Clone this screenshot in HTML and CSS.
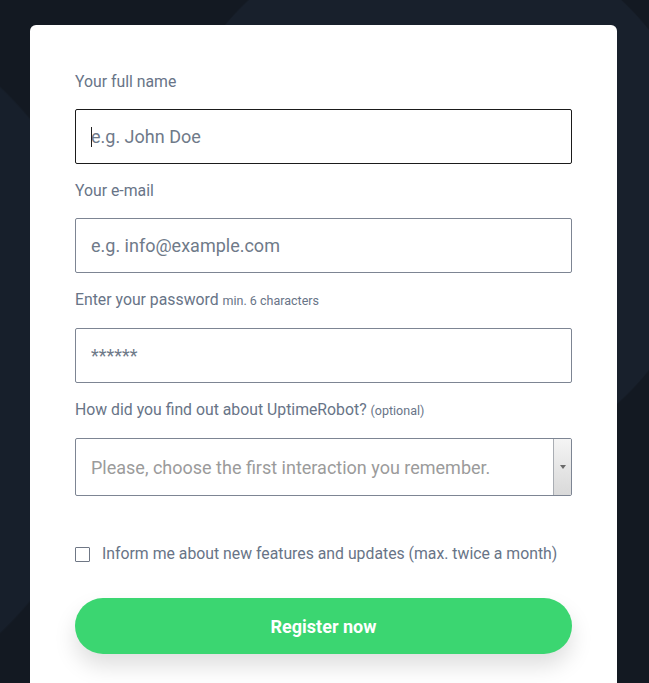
FILE: index.html
```html
<!DOCTYPE html>
<html lang="en">
<head>
<meta charset="utf-8">
<title>Register</title>
<link rel="stylesheet" href="styles.css">
</head>
<body>
<div class="card">
  <form class="form">
    <label class="label">Your full name</label>
    <div class="field">
      <input class="input input-focus" type="text" placeholder="e.g. John Doe">
      <span class="caret"></span>
    </div>

    <label class="label">Your e-mail</label>
    <div class="field">
      <input class="input" type="email" placeholder="e.g. info@example.com">
    </div>

    <label class="label">Enter your password <small class="hint">min. 6 characters</small></label>
    <div class="field">
      <input class="input" type="password" placeholder="******">
    </div>

    <label class="label">How did you find out about UptimeRobot? <small class="hint">(optional)</small></label>
    <div class="select">
      <span class="select-text">Please, choose the first interaction you remember.</span>
      <span class="select-btn"><span class="tri"></span></span>
    </div>

    <label class="check">
      <span class="box"></span>
      <span class="check-text">Inform me about new features and updates (max. twice a month)</span>
    </label>

    <button type="button" class="btn">Register now</button>
  </form>
</div>
</body>
</html>
```

FILE: styles.css
```css
html, body {
  margin: 0;
  padding: 0;
}
body {
  width: 649px;
  height: 683px;
  overflow: hidden;
  font-family: Roboto, "Liberation Sans", Arial, sans-serif;
  background-color: #131922;
  background-image:
    radial-gradient(circle 274px at 435px 200px, #18202c 99.5%, transparent 100%),
    radial-gradient(circle 378px at -260px 360px, #171f2b 99.5%, transparent 100%);
  background-repeat: no-repeat;
}
.card {
  margin: 25px 0 0 30px;
  width: 587px;
  height: 658px;
  box-sizing: border-box;
  background: #ffffff;
  border-radius: 6px 6px 0 0;
  padding: 47px 45px 0;
}
.form {
  display: flex;
  flex-direction: column;
}
.label {
  display: block;
  font-size: 15.8px;
  line-height: 20px;
  color: #687487;
  margin-bottom: 17px;
}
.hint {
  font-size: 12.5px;
  color: #687487;
}
.field {
  position: relative;
  margin-bottom: 17px;
}
.input {
  display: block;
  width: 100%;
  height: 55px;
  box-sizing: border-box;
  border: 1px solid #7d8593;
  border-radius: 2px;
  padding: 0 15px;
  font-family: Roboto, "Liberation Sans", Arial, sans-serif;
  font-size: 18px;
  color: #333;
  background: #fff;
  outline: none;
}
.input::placeholder {
  color: #6f7a89;
  opacity: 1;
}
.input-focus {
  border-color: #1b1b1b;
}
.caret {
  position: absolute;
  left: 16px;
  top: 18px;
  width: 1px;
  height: 20px;
  background: #222;
}
.select {
  display: flex;
  height: 58px;
  box-sizing: border-box;
  border: 1px solid #7d8593;
  border-radius: 2px;
  overflow: hidden;
}
.select-text {
  flex: 1;
  display: flex;
  align-items: center;
  padding-left: 15px;
  font-size: 18px;
  color: #9b9b9b;
  white-space: nowrap;
}
.select-btn {
  width: 17px;
  border-left: 1px solid #a9adb3;
  background: linear-gradient(to bottom, #f4f4f4, #d9d9d9);
  display: flex;
  align-items: center;
  justify-content: center;
}
.tri {
  width: 0;
  height: 0;
  border-left: 3px solid transparent;
  border-right: 3px solid transparent;
  border-top: 4px solid #6a6a6a;
}
.check {
  display: flex;
  align-items: center;
  gap: 12px;
  margin-top: 48px;
  height: 20px;
}
.box {
  width: 15px;
  height: 15px;
  box-sizing: border-box;
  border: 1px solid #6f7785;
  border-radius: 1px;
  flex: none;
}
.check-text {
  font-size: 15.8px;
  line-height: 20px;
  color: #687487;
}
.btn {
  margin-top: 34px;
  height: 56px;
  border: none;
  border-radius: 28px;
  background: #3bd671;
  color: #ffffff;
  font-family: Roboto, "Liberation Sans", Arial, sans-serif;
  font-size: 18px;
  font-weight: 700;
  box-shadow: 0 12px 22px rgba(0, 0, 0, 0.13);
  cursor: pointer;
}
```
